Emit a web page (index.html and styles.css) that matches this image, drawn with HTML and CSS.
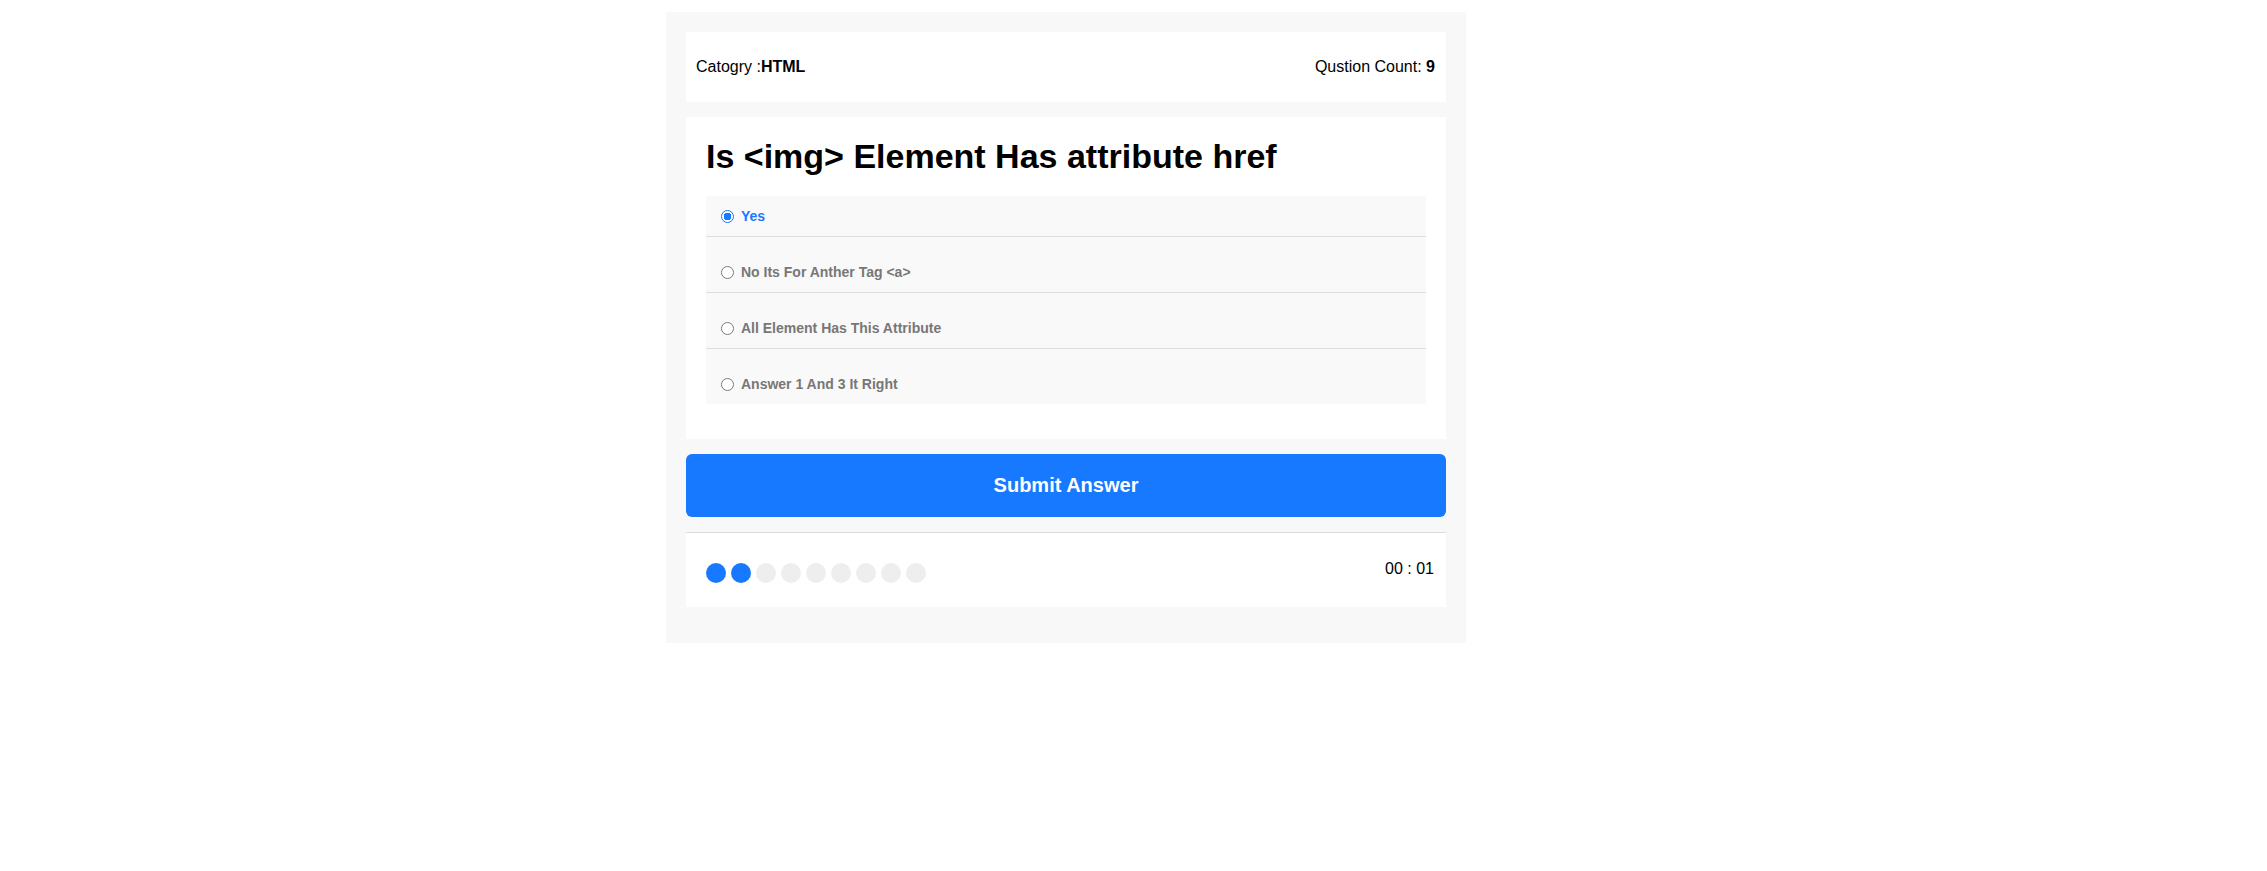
FILE: index.html
```html
<!DOCTYPE html>
<html lang="en">
<head>
<meta charset="UTF-8">
<title>Quiz App</title>
<link rel="stylesheet" href="styles.css">
</head>
<body>
<div class="quiz-app">
  <div class="quiz-info">
    <div class="category">Catogry :<span class="strong">HTML</span></div>
    <div class="count">Qustion Count: <span class="strong">9</span></div>
  </div>
  <div class="quiz-area">
    <h2 class="question-title">Is &lt;img&gt; Element Has attribute href</h2>
    <div class="answers-area">
      <div class="answer">
        <input class="radio" type="radio" name="question" id="answer_1" checked>
        <label class="answer-label" for="answer_1">Yes</label>
      </div>
      <div class="answer">
        <input class="radio" type="radio" name="question" id="answer_2">
        <label class="answer-label" for="answer_2">No Its For Anther Tag &lt;a&gt;</label>
      </div>
      <div class="answer">
        <input class="radio" type="radio" name="question" id="answer_3">
        <label class="answer-label" for="answer_3">All Element Has This Attribute</label>
      </div>
      <div class="answer">
        <input class="radio" type="radio" name="question" id="answer_4">
        <label class="answer-label" for="answer_4">Answer 1 And 3 It Right</label>
      </div>
    </div>
  </div>
  <button class="submit-button">Submit Answer</button>
  <div class="bullets">
    <div class="spans">
      <span class="dot on"></span>
      <span class="dot on"></span>
      <span class="dot"></span>
      <span class="dot"></span>
      <span class="dot"></span>
      <span class="dot"></span>
      <span class="dot"></span>
      <span class="dot"></span>
      <span class="dot"></span>
    </div>
    <div class="countdown">00 : 01</div>
  </div>
</div>
</body>
</html>
```

FILE: styles.css
```css
* {
  box-sizing: border-box;
}

body {
  margin: 0;
  background: #ffffff;
  font-family: "Liberation Sans", Arial, Helvetica, sans-serif;
  color: #000;
}

.quiz-app {
  width: 800px;
  margin: 12px 0 0 666px;
  padding: 20px 20px 36px;
  background: #f8f8f8;
}

.quiz-info {
  display: flex;
  justify-content: space-between;
  align-items: center;
  height: 70px;
  padding: 0 11px 0 10px;
  background: #ffffff;
  font-size: 16px;
}

.strong {
  font-weight: bold;
}

.quiz-area {
  margin-top: 15px;
  padding: 20px 20px 20px;
  background: #ffffff;
}

.question-title {
  margin: 0 0 20px;
  font-size: 34px;
  font-weight: bold;
  line-height: 39px;
}

.answers-area {
  margin-bottom: 15px;
}

.answer {
  display: flex;
  align-items: center;
  height: 56px;
  padding: 27px 15px 12px;
  background: #f9f9f9;
  border-top: 1px solid #dcdcdc;
}

.answer:first-child {
  height: 40px;
  padding-top: 12px;
  border-top: none;
}

.radio {
  appearance: none;
  -webkit-appearance: none;
  width: 13px;
  height: 13px;
  margin: 0;
  border: 1px solid #7a7a7a;
  border-radius: 50%;
  background: #ffffff;
  flex: none;
}

.radio:checked {
  border: 1.5px solid #1779ff;
  background: radial-gradient(circle, #1779ff 0 3.6px, #ffffff 4px);
}

.answer-label {
  margin-left: 7px;
  font-size: 14px;
  font-weight: bold;
  color: #777777;
  line-height: 16px;
}

.radio:checked + .answer-label {
  color: #1779ff;
}

.submit-button {
  display: block;
  width: 100%;
  height: 63px;
  margin-top: 15px;
  border: none;
  border-radius: 6px;
  background: #1779ff;
  color: #ffffff;
  font-family: "Liberation Sans", Arial, Helvetica, sans-serif;
  font-size: 20px;
  font-weight: bold;
}

.bullets {
  display: flex;
  justify-content: space-between;
  align-items: flex-start;
  margin-top: 15px;
  padding: 20px 12px 24px 20px;
  background: #ffffff;
  border-top: 1px solid #dcdcdc;
}

.spans {
  display: flex;
  gap: 5px;
  margin-top: 10px;
}

.dot {
  width: 20px;
  height: 20px;
  border-radius: 50%;
  background: #eeeeee;
}

.dot.on {
  background: #1779ff;
}

.countdown {
  margin-top: 7px;
  font-size: 16px;
  line-height: normal;
}
```
